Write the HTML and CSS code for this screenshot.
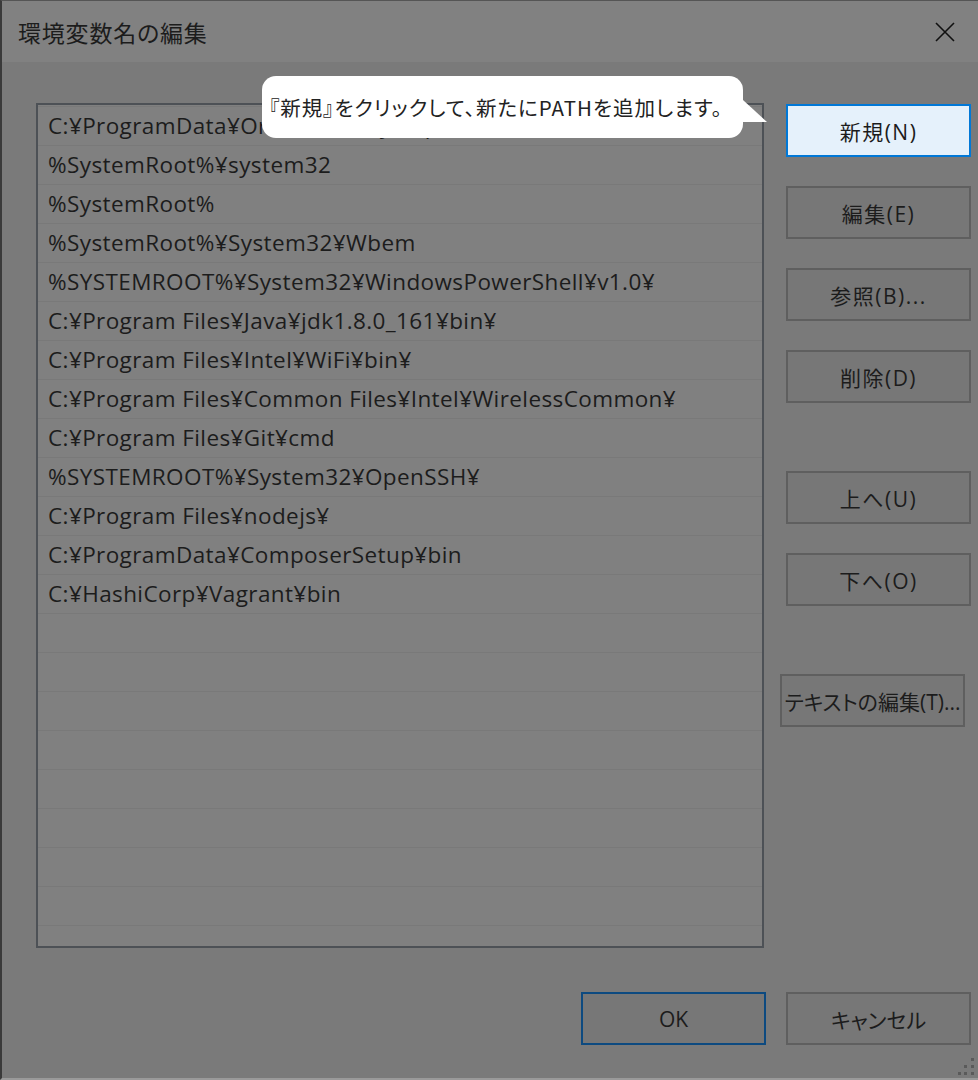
FILE: index.html
```html
<!DOCTYPE html>
<html lang="ja">
<head>
<meta charset="utf-8">
<title>環境変数名の編集</title>
<link rel="stylesheet" href="styles.css">
</head>
<body>
<div class="dialog">
  <header class="titlebar">
    <span class="title">環境変数名の編集</span>
    <svg class="close" width="22" height="22" viewBox="0 0 22 22"><path d="M2 2L20 20M20 2L2 20"/></svg>
  </header>
  <div class="content">
    <div class="main">
      <ul class="list">
        <li>C:¥ProgramData¥Oracle¥Java¥javapath</li>
        <li>%SystemRoot%¥system32</li>
        <li>%SystemRoot%</li>
        <li>%SystemRoot%¥System32¥Wbem</li>
        <li>%SYSTEMROOT%¥System32¥WindowsPowerShell¥v1.0¥</li>
        <li>C:¥Program Files¥Java¥jdk1.8.0_161¥bin¥</li>
        <li>C:¥Program Files¥Intel¥WiFi¥bin¥</li>
        <li>C:¥Program Files¥Common Files¥Intel¥WirelessCommon¥</li>
        <li>C:¥Program Files¥Git¥cmd</li>
        <li>%SYSTEMROOT%¥System32¥OpenSSH¥</li>
        <li>C:¥Program Files¥nodejs¥</li>
        <li>C:¥ProgramData¥ComposerSetup¥bin</li>
        <li>C:¥HashiCorp¥Vagrant¥bin</li>
      </ul>
      <div class="buttons">
        <button class="btn primary">新規(N)</button>
        <button class="btn">編集(E)</button>
        <button class="btn">参照(B)...</button>
        <button class="btn">削除(D)</button>
        <button class="btn group">上へ(U)</button>
        <button class="btn">下へ(O)</button>
        <button class="btn group text-edit">テキストの編集(T)...</button>
      </div>
    </div>
    <footer class="footer">
      <button class="btn ok">OK</button>
      <button class="btn cancel">キャンセル</button>
    </footer>
  </div>
  <svg class="grip" width="18" height="18" viewBox="0 0 18 18">
    <rect x="13" y="0" width="3" height="3"/>
    <rect x="6" y="7" width="3" height="3"/><rect x="13" y="7" width="3" height="3"/>
    <rect x="0" y="14" width="3" height="3"/><rect x="6" y="14" width="3" height="3"/><rect x="13" y="14" width="3" height="3"/>
  </svg>
  <div class="callout">『新規』をクリックして、新たにPATHを追加します。</div>
</div>
</body>
</html>
```

FILE: styles.css
```css
* { box-sizing: border-box; }
html, body { margin: 0; padding: 0; }
body {
  width: 978px;
  height: 1080px;
  overflow: hidden;
  background: #7a7a7a;
  font-family: "Open Sans", "Noto Sans CJK JP", sans-serif;
  font-feature-settings: "palt";
  color: #1c1c1c;
}
.dialog {
  position: relative;
  width: 978px;
  height: 1080px;
  border-left: 2px solid #3a3a3a;
  border-top: 1px solid #555;
  border-bottom: 2px solid #9a9a9a;
  display: flex;
  flex-direction: column;
}
.titlebar {
  height: 61px;
  background: #818181;
  display: flex;
  align-items: center;
  justify-content: space-between;
  padding: 0 22px 0 16px;
}
.title {
  font-family: "Noto Sans CJK JP", sans-serif;
  font-size: 23px;
  color: #1c1c1c;
  letter-spacing: 0.8px;
}
.close path {
  stroke: #111;
  stroke-width: 1.6;
  fill: none;
}
.content {
  flex: 1;
  padding: 41px 7px 0 34px;
  display: flex;
  flex-direction: column;
}
.main {
  display: flex;
  align-items: flex-start;
}
.list {
  margin: 0;
  padding: 1px 0 0;
  list-style: none;
  width: 728px;
  height: 845px;
  border: 2px solid #4d5156;
  background: repeating-linear-gradient(to bottom, #797979 0 1px, #808080 1px 39px);
  background-position: 0 1px;
  overflow: hidden;
}
.list li {
  height: 39px;
  line-height: 39px;
  padding-left: 10px;
  font-size: 22.5px;
  letter-spacing: 0.4px;
  color: #1c1c1c;
  white-space: nowrap;
}
.buttons {
  margin-left: 22px;
  width: 185px;
  display: flex;
  flex-direction: column;
  gap: 29px;
  padding-top: 1px;
}
.btn {
  font-family: "Open Sans", "Noto Sans CJK JP", sans-serif;
  font-feature-settings: "palt";
  font-size: 21px;
  letter-spacing: 1.5px;
  color: #1c1c1c;
  width: 185px;
  height: 53px;
  padding: 0;
  background: #777777;
  border: 2px solid #5f5f5f;
  display: flex;
  align-items: center;
  justify-content: center;
  white-space: nowrap;
}
.btn.primary {
  background: #e5f1fb;
  border-color: #0078d7;
}
.btn.group { margin-top: 39px; }
.btn.text-edit { margin-left: -6px; letter-spacing: 0; }
.btn.cancel { letter-spacing: 0; }
.footer {
  margin-top: 44px;
  display: flex;
  justify-content: flex-end;
  gap: 20px;
}
.btn.ok { border-color: #0d4a80; letter-spacing: 0; }
.grip {
  position: absolute;
  right: 2px;
  bottom: 2px;
}
.grip rect { fill: #5a5a5a; }
.callout {
  position: absolute;
  left: 260px;
  top: 75px;
  width: 481px;
  height: 62px;
  background: #ffffff;
  border-radius: 14px;
  display: flex;
  align-items: center;
  padding-left: 7px;
  font-family: "Noto Sans CJK JP", sans-serif;
  font-feature-settings: "palt";
  font-size: 20.5px;
  letter-spacing: 1px;
  color: #222;
  white-space: nowrap;
}
.callout::after {
  content: "";
  position: absolute;
  left: 476px;
  top: 24px;
  width: 29px;
  height: 22px;
  background: #ffffff;
  clip-path: polygon(0 0, 5px 0, 100% 100%, 0 100%);
}
```
